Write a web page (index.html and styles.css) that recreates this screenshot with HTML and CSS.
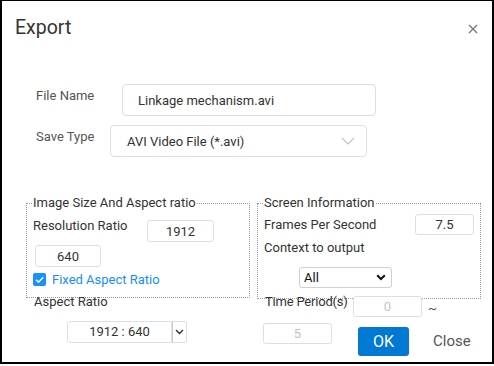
FILE: index.html
```html
<!DOCTYPE html>
<html lang="en">
<head>
<meta charset="utf-8">
<title>Export</title>
<link rel="stylesheet" href="styles.css">
</head>
<body>
<div class="dialog">
  <div class="header">
    <span class="title">Export</span>
    <svg class="close" width="10" height="10" viewBox="0 0 10 10"><path d="M1 1L9 9M9 1L1 9" stroke="#7a7a7a" stroke-width="1.4" fill="none"/></svg>
  </div>

  <div class="form">
    <div class="row">
      <label class="flabel lbl-file">File Name</label>
      <input class="text-input" type="text" value="Linkage mechanism.avi">
    </div>
    <div class="row row-type">
      <label class="flabel lbl-type">Save Type</label>
      <div class="ui-select">
        <span>AVI Video File (*.avi)</span>
        <svg width="14" height="8" viewBox="0 0 14 8"><path d="M1 1L7 7L13 1" stroke="#c0c4cc" stroke-width="1.1" fill="none"/></svg>
      </div>
    </div>
  </div>

  <div class="groups">
    <div class="col">
      <fieldset class="box">
        <legend>Image Size And Aspect ratio</legend>
        <div class="res-row">
          <span class="glabel res-label">Resolution Ratio</span>
          <input class="small-input w-res" type="text" value="1912">
        </div>
        <input class="small-input w-640" type="text" value="640">
        <label class="check-row">
          <span class="check"><svg width="13" height="13" viewBox="0 0 13 13"><path d="M3 6.8L5.5 9.2L10.2 4.2" stroke="#fff" stroke-width="1.5" fill="none"/></svg></span>
          <span class="check-text">Fixed Aspect Ratio</span>
        </label>
      </fieldset>
      <div class="glabel after-label">Aspect Ratio</div>
      <div class="ratio">
        <span class="ratio-value">1912 : 640</span>
        <span class="ratio-btn"><svg width="9" height="6" viewBox="0 0 9 6"><path d="M1 1L4.5 4.5L8 1" stroke="#333" stroke-width="1.4" fill="none"/></svg></span>
      </div>
    </div>

    <div class="col">
      <fieldset class="box">
        <legend>Screen Information</legend>
        <div class="fps-row">
          <span class="glabel">Frames Per Second</span>
          <input class="small-input w-fps" type="text" value="7.5">
        </div>
        <div class="glabel ctx-label">Context to output</div>
        <div class="native-select">
          <span>All</span>
          <svg width="10" height="7" viewBox="0 0 10 7"><path d="M1.2 1.2L5 5L8.8 1.2" stroke="#111" stroke-width="2" fill="none"/></svg>
        </div>
      </fieldset>
      <div class="time-row">
        <span class="glabel time-label">Time Period(s)</span>
        <input class="small-input w-time" type="text" placeholder="0">
        <span class="tilde">~</span>
      </div>
      <div class="action-row">
        <input class="small-input w-end" type="text" placeholder="5">
        <button class="ok">OK</button>
        <span class="close-text">Close</span>
      </div>
    </div>
  </div>
</div>
</body>
</html>
```

FILE: styles.css
```css
* { box-sizing: border-box; }
html, body { margin: 0; padding: 0; background: #fff; }
body { font-family: Roboto, "Open Sans", sans-serif; color: #333; }

.dialog {
  width: 494px;
  height: 364px;
  border: 2px solid #000;
  border-top-width: 1px;
  background: #fff;
}

.header {
  display: flex;
  justify-content: space-between;
  align-items: center;
  height: 28px;
  margin-top: 13px;
  padding: 0 14px 0 13px;
}
.title { font-size: 19.5px; line-height: 28px; color: #333; }
.close { display: block; margin-top: 2px; }

.form { margin-top: 42px; }
.row { display: flex; align-items: flex-start; padding-left: 34px; }
.row-type { margin-top: 9px; }
.flabel { font-size: 13px; line-height: 24px; color: #555; flex: none; }
.lbl-file { width: 86px; }
.lbl-type { width: 74px; }

.text-input {
  width: 254px;
  height: 32px;
  border: 1px solid #dcdfe6;
  border-radius: 4px;
  padding: 0 15px;
  font: inherit;
  font-size: 13px;
  color: #333;
  outline: none;
}
.ui-select {
  width: 257px;
  height: 32px;
  border: 1px solid #dcdfe6;
  border-radius: 4px;
  padding: 0 11px 0 16px;
  display: flex;
  align-items: center;
  justify-content: space-between;
  font-size: 13px;
  color: #333;
}

.groups {
  display: grid;
  grid-template-columns: 224px 224px;
  column-gap: 7px;
  padding-left: 24px;
  margin-top: 38px;
}
.box {
  margin: 0;
  min-width: 0;
  border: 1px dotted #9a9a9a;
  padding: 0 6px 10px 6px;
}
.box legend {
  padding: 0;
  font-size: 13px;
  line-height: 16px;
  color: #333;
}
.glabel { font-size: 13px; line-height: 18px; color: #333; white-space: nowrap; }

.small-input {
  display: block;
  height: 22px;
  border: 1px solid #dcdfe6;
  border-radius: 3px;
  font: inherit;
  font-size: 13px;
  color: #333;
  text-align: center;
  padding: 0;
  outline: none;
}
.small-input::placeholder { color: #c0c4cc; }

.res-row { display: flex; align-items: flex-start; margin-top: 9px; }
.res-label { width: 114px; margin-top: -3px; flex: none; }
.w-res { width: 67px; }
.w-640 { width: 66px; margin: 3px 0 0 2px; }

.check-row { display: flex; align-items: center; margin-top: 4px; height: 16px; }
.check {
  width: 13px;
  height: 13px;
  border-radius: 2px;
  background: #1890ff;
  display: flex;
}
.check-text { margin-left: 6px; font-size: 13px; color: #1a8cff; }

.after-label { margin: -5px 0 0 8px; }
.ratio { display: flex; margin: 10px 0 0 41px; height: 22px; }
.ratio-value {
  width: 105px;
  border: 1px solid #dcdfe6;
  border-radius: 3px 0 0 3px;
  font-size: 13px;
  line-height: 20px;
  text-align: center;
  color: #333;
}
.ratio-btn {
  width: 15px;
  border: 1px solid #dcdfe6;
  border-left-color: #ccc;
  border-radius: 0 3px 3px 0;
  display: flex;
  align-items: center;
  justify-content: center;
}

.fps-row { display: flex; align-items: flex-start; justify-content: space-between; margin-top: 3px; }
.fps-row .glabel { margin-top: 2px; }
.w-fps { width: 59px; height: 21px; }
.ctx-label { margin-top: 4px; }
.native-select {
  width: 93px;
  height: 21px;
  margin: 10px 0 0 35px;
  border: 1px solid #d0d0d0;
  border-radius: 3px;
  padding: 0 5px 0 4px;
  display: flex;
  align-items: center;
  justify-content: space-between;
  font-size: 13px;
  color: #111;
}

.time-row { display: flex; align-items: flex-start; margin: -6px 0 0 8px; }
.time-label { width: 88px; flex: none; letter-spacing: -0.2px; }
.w-time { width: 69px; height: 21px; margin-top: 3px; }
.tilde { margin: 10px 0 0 6px; font-size: 13px; line-height: 12px; color: #555; }

.action-row { display: flex; align-items: flex-start; margin: 6px 0 0 6px; }
.w-end { width: 69px; height: 21px; }
.ok {
  margin: 4px 0 0 26px;
  width: 51px;
  height: 29px;
  border: none;
  border-radius: 3px;
  background: #0078d4;
  color: #fff;
  font: inherit;
  font-size: 16px;
  padding: 0;
}
.close-text { margin: 8px 0 0 24px; font-size: 15px; line-height: 20px; color: #555; }
```
